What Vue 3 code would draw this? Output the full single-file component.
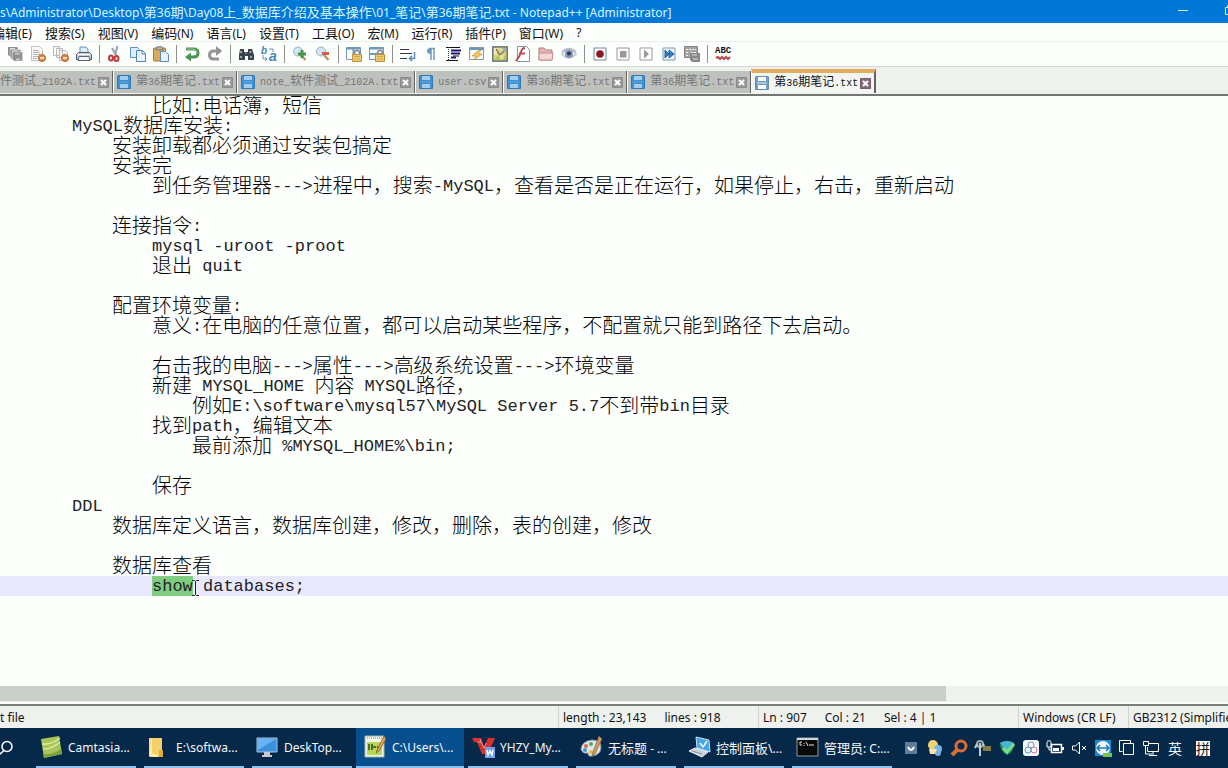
<script setup>
const title = 's\\Administrator\\Desktop\\第36期\\Day08上_数据库介绍及基本操作\\01_笔记\\第36期笔记.txt - Notepad++ [Administrator]'

const menus = ['编辑(E)', '搜索(S)', '视图(V)', '编码(N)', '语言(L)', '设置(T)', '工具(O)', '宏(M)', '运行(R)', '插件(P)', '窗口(W)', '?']

const toolGroups = [
  ['saveAll', 'close', 'closeAll', 'print'],
  ['cut', 'copy', 'paste'],
  ['undo', 'redo'],
  ['find', 'replace'],
  ['zoomIn', 'zoomOut'],
  ['syncV', 'syncH'],
  ['wrap', 'pilcrow', 'indent', 'lang', 'map', 'func', 'folder', 'eye'],
  ['record', 'stop', 'play', 'fast', 'saveMacro'],
  ['spell']
]

const icons = {
  saveAll: '<path d="M1 1h9l1 1v8H2l-1-1z" fill="#8f8f8f"/><path d="M3 3.500h10l1 1V13H5l-2-2z" fill="#9a9a9a" stroke="#e4e4e4" stroke-width=".5"/><path d="M5.500 6H15l.5.5V15H7l-1.500-1.500z" fill="#8f8f8f" stroke="#e4e4e4" stroke-width=".5"/><path d="M3 2.500h5M5 5h6M8 8h5" stroke="#dedede"/><path d="M9 13.500h4" stroke="#c4c4c4" stroke-width="2"/>',
  close: '<path d="M1.500 .5h8l3 3v11h-11z" fill="#fafafa" stroke="#c2c2c2"/><path d="M3 4.500h6M3 6.500h7M3 8.500h7M3 10.500h5M3 12.500h4" stroke="#b4b4b4"/><circle cx="12" cy="12" r="3.500" fill="#e08a40" stroke="#b9602a"/><path d="M10 12h4" stroke="#fff" stroke-width="1.500"/>',
  closeAll: '<path d="M.5 .5h6v9h-6zM3.500 2.500h6v9h-6zM6.500 4.500h6l2 2v8h-8z" fill="#fafafa" stroke="#b8b8b8"/><circle cx="12" cy="12" r="3.500" fill="#e08a40" stroke="#b9602a"/><path d="M10 12h4" stroke="#fff" stroke-width="1.500"/>',
  print: '<path d="M4 7V1h6l2 2v4z" fill="#dcecff" stroke="#6b8fb8"/><path d="M.5 8.500l2-2h11l2 2v5H.5z" fill="#c3ccd8" stroke="#4c5a70"/><path d="M3 10.500h10l1 4H2z" fill="#f2f7fd" stroke="#5a6678"/><path d="M1 8.500h14" stroke="#f4f6fa"/>',
  cut: '<path d="M10.500 0L8 9M5 2l4.500 8" stroke="#97a1ad" stroke-width="2" fill="none"/><ellipse cx="4" cy="12" rx="2" ry="2.500" fill="none" stroke="#c3393c" stroke-width="2"/><ellipse cx="9.500" cy="12.500" rx="2" ry="2.500" fill="none" stroke="#c3393c" stroke-width="2"/>',
  copy: '<path d="M.5 1.500h7l2 2v8h-9z" fill="#dfeeff" stroke="#5f8fc4"/><path d="M6.500 4.500h6l3 3v8h-9z" fill="#eaf4ff" stroke="#4f82ba"/><path d="M12 5v3h3" fill="none" stroke="#4f82ba"/>',
  paste: '<rect x=".5" y="2" width="12" height="13" rx="1" fill="#dba85c" stroke="#a9772e"/><path d="M4 .8h5l1 3H3z" fill="#b8b8b8" stroke="#777"/><path d="M7.500 5.500h5l3 3v7h-8z" fill="#e6f2ff" stroke="#5687bd"/>',
  undo: '<path d="M2 3h7.500q4.500 0 4.500 4t-4.500 4H6" fill="none" stroke="#4b9350" stroke-width="3"/><path d="M7 6.500v9L1 11z" fill="#4b9350"/><path d="M3 3h6q4 0 4 4" fill="none" stroke="#93c494"/>',
  redo: '<path d="M14 5H7q-4.500 0-4.500 4T7 13h5" fill="none" stroke="#949494" stroke-width="3"/><path d="M9 0v10l6-5z" fill="#949494"/>',
  find: '<path d="M2 3h4v3h4V3h4l2 6v5h-6v-4H7v4H1V9z" fill="#39434c"/><path d="M3 5v2M12.500 5v2M3 10v2M13 10v2M7.500 7h1" stroke="#b2c3cc" stroke-width="1.500"/>',
  replace: '<text x="0" y="8" font-family="Liberation Sans" font-size="10" font-weight="700" font-style="italic" fill="#4b83ad">b</text><text x="8" y="15" font-family="Liberation Sans" font-size="14" font-weight="700" font-style="italic" fill="#4189bb">a</text><path d="M2 9v4h4M4 11l2 2-2 2M8 3h4v3" fill="none" stroke="#6694b3"/>',
  zoomIn: '<path d="M9 9l4.500 5" stroke="#bd9474" stroke-width="2.500"/><circle cx="6" cy="5.500" r="4.500" fill="#d3e6f6" stroke="#9aafc6"/><path d="M10 4v8M6 8h8" stroke="#479350" stroke-width="3"/>',
  zoomOut: '<path d="M9 9l4.500 5" stroke="#bd9474" stroke-width="2.500"/><circle cx="6" cy="5.500" r="4.500" fill="#d3e6f6" stroke="#9aafc6"/><path d="M7 7.500h7" stroke="#d65b4c" stroke-width="3"/>',
  syncV: '<path d="M.5 1.500h14v12H.5z" fill="#f5fafc" stroke="#7398b8"/><path d="M1 2.500h13M7.500 2v11" stroke="#7398b8" stroke-width="2"/><path d="M8.500 8V6.500q0-2 2.500-2t2.500 2V8" fill="none" stroke="#888" stroke-width="1.500"/><path d="M6.500 8.500h9v7h-9z" fill="#f0ca70" stroke="#bb903c"/><path d="M8 10.500h6M8 13h6" stroke="#d9a744"/>',
  syncH: '<path d="M.5 1.500h14v12H.5z" fill="#f5fafc" stroke="#7398b8"/><path d="M1 2.500h13M1 8h13" stroke="#7398b8" stroke-width="2"/><path d="M8.500 8V6.500q0-2 2.500-2t2.500 2V8" fill="none" stroke="#888" stroke-width="1.500"/><path d="M6.500 8.500h9v7h-9z" fill="#f0ca70" stroke="#bb903c"/><path d="M8 10.500h6M8 13h6" stroke="#d9a744"/>',
  wrap: '<path d="M0 3.500h9M0 7.500h12M0 12.500h7" stroke="#34383d"/><path d="M14.500 6v6.500H10M12 10l-2.500 2.500L12 15" fill="none" stroke="#5e8db4" stroke-width="1.500"/>',
  pilcrow: '<path d="M8 2v12M11 2v12M6 2.500h6" stroke="#7199bb" stroke-width="1.500" fill="none"/><path d="M8 2q-4 0-4 3t4 3z" fill="#7199bb"/>',
  indent: '<path d="M0 1.500h14M7 10h6M0 14.500h12" stroke="#111"/><path d="M5 4.500h10M5 7.500h9M5 11.500h5" stroke="#191970" stroke-width="2"/><path d="M2.500 1v14" stroke="#333" stroke-dasharray="1 1"/>',
  lang: '<path d="M.5 1.500h14v12H.5z" fill="#f5fafc" stroke="#8098ac"/><path d="M1 3h13" stroke="#6898c2" stroke-width="2"/><path d="M10 4L3 10h4l-2 4 8-6H9l3-4z" fill="#f4c85c" stroke="#c99330" stroke-width=".7"/>',
  map: '<path d="M.8 .8h14.400v14.400H.8z" fill="#dbd98b" stroke="#4d5860" stroke-width="1.200"/><path d="M2 2h4l-1 4-3 3z" fill="#f2f0c8"/><path d="M2 14l4-5 3 5zM14 8v6h-4z" fill="#b4c25e"/><path d="M4 3l4 6 5-5" fill="none" stroke="#8b7a58" stroke-width="1.500"/><path d="M8 9l3 4" stroke="#f7f2c5"/><path d="M10 2h4v5z" fill="#88b5c4"/>',
  func: '<path d="M2.500 .5h9l3 3v12h-12z" fill="#fff" stroke="#88949c"/><path d="M10 2Q7 2 6 6T1 15M4 7.500h6" fill="none" stroke="#bc4b52" stroke-width="2"/>',
  folder: '<path d="M1 4V2h5l1.500 2H14v10H1z" fill="#e8b5b5" stroke="#b77a7d"/><path d="M1 7h14l-1 7H1z" fill="#f4d6d4" stroke="#c18e90"/>',
  eye: '<path d="M.5 8q7-9 15 0-8 8-15 0z" fill="#edf0f2" stroke="#a1a9b4"/><circle cx="8" cy="8" r="4" fill="#8198b5"/><circle cx="8" cy="7.500" r="2" fill="#26395b"/><path d="M1 6Q8-1 15 6" fill="none" stroke="#b6bac1" stroke-width="1.500"/>',
  record: '<path d="M2 2h12v12H2z" fill="#fff" stroke="#7188a0"/><circle cx="8" cy="8" r="3.800" fill="#8e1821"/>',
  stop: '<path d="M2 2h12v12H2z" fill="#fff" stroke="#999"/><path d="M5 5h6.500v6.500H5z" fill="#999"/>',
  play: '<path d="M2 2h12v12H2z" fill="#fff" stroke="#999"/><path d="M6 3.500v9L11 8z" fill="#999"/>',
  fast: '<path d="M2 2h12v12H2z" fill="#eef6ff" stroke="#7797b8"/><path d="M4 4v8l4-4zM8 4v8l5-4z" fill="#357cc1" stroke="#28659b"/>',
  saveMacro: '<path d="M.5 .5h13v11H.5z" fill="#a4a4a4" stroke="#858585"/><path d="M2 3.500h10M2 6.500h3M7 6.500h5M2 9.500h3" stroke="#f4f4f4" stroke-dasharray="2 1"/><path d="M6 7h10v9H8l-2-2z" fill="#898989"/><path d="M8 9h5M9 13h5" stroke="#ddd"/>',
  spell: '<text x="0" y="7" font-family="Liberation Mono" font-size="9" font-weight="700" fill="#111">ABC</text><path d="M1 12l2-1 2 2 2-2 2 2 2-2 2 2 2-2" fill="none" stroke="#bc4a4e" stroke-width="2"/>'
}

const tabs = [
  { name: '件测试_2102A.txt', cut: true },
  { name: '第36期笔记.txt' },
  { name: 'note_软件测试_2102A.txt' },
  { name: 'user.csv' },
  { name: '第36期笔记.txt' },
  { name: '第36期笔记.txt' },
  { name: '第36期笔记.txt', active: true }
]

const lines = [
  [3, '比如:电话簿，短信'],
  [1, 'MySQL数据库安装:'],
  [2, '安装卸载都必须通过安装包搞定'],
  [2, '安装完'],
  [3, '到任务管理器--->进程中，搜索-MySQL，查看是否是正在运行，如果停止，右击，重新启动'],
  [0, ''],
  [2, '连接指令:'],
  [3, 'mysql -uroot -proot'],
  [3, '退出 quit'],
  [0, ''],
  [2, '配置环境变量:'],
  [3, '意义:在电脑的任意位置，都可以启动某些程序，不配置就只能到路径下去启动。'],
  [0, ''],
  [3, '右击我的电脑--->属性--->高级系统设置--->环境变量'],
  [3, '新建 MYSQL_HOME 内容 MYSQL路径，'],
  [4, '例如E:\\software\\mysql57\\MySQL Server 5.7不到带bin目录'],
  [3, '找到path，编辑文本'],
  [4, '最前添加 %MYSQL_HOME%\\bin;'],
  [0, ''],
  [3, '保存'],
  [1, 'DDL'],
  [2, '数据库定义语言，数据库创建，修改，删除，表的创建，修改'],
  [0, ''],
  [2, '数据库查看'],
  [3, 'show databases;']
]

// Splits mixed text into runs so that Latin and Chinese keep their own size.
function runs(text) {
  return (text.match(/[\x20-\x7e]+|[^\x20-\x7e]+/g) || []).map(t => ({ t, kind: /^[\x20-\x7e]/.test(t) ? 'latin' : 'han' }))
}

const tasks = [
  { name: 'Camtasia...', svg: '<path d="M1 4l18-3 3 18-18 4z" fill="#a9c65a"/><path d="M2 9Q11 10 20 3M3 14q9 0 17-7" fill="none" stroke="#dbe9a4" stroke-width="1.500"/><path d="M4 23l18-4-1-5q-8 6-18 5z" fill="#7fa33c"/>' },
  { name: 'E:\\softwa...', svg: '<path d="M1 3h12v18H1z" fill="#f9dd83"/><path d="M4 3h10v16H4z" fill="#f5cf67"/><path d="M1 21l3-18v15l8 4H2z" fill="#ffe9a6"/><path d="M11 15h4v7h-4z" fill="#e0ac3d"/>' },
  { name: 'DeskTop...', svg: '<path d="M1 3h20v14H1z" fill="#3d8fdf" stroke="#a9c6dc"/><path d="M2 4h18L2 15z" fill="#68b3f1"/><path d="M8 17h6v3h2v2H6v-2h2z" fill="#c8cdd2"/>' },
  { name: 'C:\\Users\\...', active: true, svg: '<path d="M1 1h19v21H1z" fill="#f2f5ea" stroke="#a9b5a0"/><path d="M3 7h15v13H3z" fill="#b6d858"/><path d="M3 3h15" stroke="#798690" stroke-dasharray="1 1"/><path d="M5 9v6M8 9v6M9 12h3M13 12h3" stroke="#32451e" stroke-width="1.500"/><path d="M20 1L13 15l-1 3 3-2L22 4z" fill="#e5a647" stroke="#735125" stroke-width=".7"/>' },
  { name: 'YHZY_My...', svg: '<path d="M0 3h9l3 9 4-9h7l-7 16h-6L5 7H2z" fill="#d9312d"/><path d="M8 4l4 9 2-5M5 7h4" fill="none" stroke="#fff" stroke-opacity=".5"/><path d="M13 12h10v11H13z" fill="#6ea0ed"/><path d="M15 15l1 5 2-4 2 4 1-5" fill="none" stroke="#fff" stroke-width="1.500"/>' },
  { name: '无标题 - ...', svg: '<path d="M1 14Q2 6 12 5q9 0 9 7 0 8-9 9-4 1-4-3-6 1-7-4z" fill="#dce8ed" stroke="#8299a5"/><circle cx="6" cy="11" r="2" fill="#de674f"/><circle cx="11" cy="9" r="2" fill="#53aa63"/><circle cx="5" cy="15" r="2" fill="#4e93cc"/><circle cx="11" cy="17" r="2" fill="#e9bd3d"/><path d="M19 1l3 3-7 15-3 2 1-4z" fill="#d49a5a" stroke="#805f41" stroke-width=".7"/>' },
  { name: '控制面板\\...', svg: '<path d="M8 2l13 3 1 12-13-4z" fill="#48a5e9" stroke="#c1e0f5"/><path d="M12 8l3 4 4-6" fill="none" stroke="#f5fbff" stroke-width="1.500"/><path d="M1 16l6-3 13 4-6 5z" fill="#c7d2db" stroke="#eef2f5"/><path d="M4 16l10 3" stroke="#8492a0"/>' },
  { name: '管理员: C:...', svg: '<path d="M1 3h21v18H1z" fill="#080808" stroke="#94989b"/><path d="M1 4h21" stroke="#d3d6d8" stroke-width="2"/><path d="M6 7H4v3h2M8 8v1M8 10v1M10 7l2 4M13 10h5" fill="none" stroke="#e6e6e6"/>' }
]

const tray = [
  '<path d="M3 3h12v12H3z" fill="#607b9c"/><path d="M6 8q3 6 6 0" fill="none" stroke="#fff" stroke-width="2"/>',
  '<circle cx="7" cy="6" r="5" fill="#f3d071"/><circle cx="12" cy="10" r="4" fill="#73b7e3"/><circle cx="12" cy="14" r="3" fill="#77aee0"/><path d="M3 10h8l-2 5H4z" fill="#f7e4aa"/>',
  '<circle cx="11" cy="7" r="5" fill="none" stroke="#dc6c34" stroke-width="3"/><path d="M7 11l-5 5" stroke="#dc6c34" stroke-width="4"/>',
  '<circle cx="6" cy="5" r="3" fill="none" stroke="#a5aaa9" stroke-width="2"/><path d="M6 4v13M3 5l-2 4M9 5l2 4" stroke="#c5caca" stroke-width="2"/><path d="M9 7h8v5H9z" fill="#867f45"/>',
  '<path d="M2 4q7-4 14 0 0 9-7 12Q2 12 2 4z" fill="#24945f"/><path d="M2 4q7-4 14 0L9 12z" fill="#4bb5d7"/><path d="M5 9l4 4 7-8" fill="none" stroke="#7bdf83" stroke-width="3"/>',
  '<rect x="1" y="1" width="16" height="16" rx="3" fill="#f5f8fa"/><circle cx="9" cy="6" r="3" fill="none" stroke="#7190a8"/><circle cx="6" cy="11" r="3" fill="none" stroke="#4f9dcc"/><circle cx="12" cy="11" r="3" fill="none" stroke="#d7788e"/>',
  '<path d="M5.500 5.500h10v8h-10z" fill="none" stroke="#fff" stroke-width="1.500"/><path d="M7 9h6v3H7zM16 8h2v3h-2z" fill="#fff"/><path d="M1 3v5h4V3M2 1v2M4 1v2M3 8v3h2" fill="none" stroke="#fff"/>',
  '<path d="M2.500 7h3l4-4v12l-4-4h-3z" fill="none" stroke="#fff"/><path d="M12 7l4 4M16 7l-4 4" stroke="#fff"/>',
  '<path d="M1 1h16v16H1z" fill="#1689d8"/><circle cx="9" cy="9" r="7" fill="#f2f8fc"/><path d="M4 9h10M6 6L3 9l3 3M12 6l3 3-3 3" fill="none" stroke="#1778ba" stroke-width="1.500"/><path d="M9 14h9v4H9z" fill="#78c34c"/>',
  '<path d="M4.500 12.500h-3v-11h11v3M5.500 4.500h10v11h-10z" fill="none" stroke="#fff"/>',
  '<path d="M6 4.500h10.500v8H5.500V8M1.500 2.500h5v4h-5zM3.500 7v8H10M11 13v3M7 16.500h8" fill="none" stroke="#fff"/>'
]
</script>

<template>
  <div class="window">
    <header class="titlebar">
      <h1 class="title"><span v-for="(r, k) in runs(title)" :key="k" :class="r.kind">{{ r.t }}</span></h1>
      <div class="captions">
        <button class="caption" type="button" aria-label="Minimize"><svg width="12" height="12"><path d="M1 6.500h10" stroke="#d9f4ff" /></svg></button>
        <button class="caption last" type="button" aria-label="Restore"><svg width="12" height="12"><path d="M.5 3.500h8v7h-8zM2.500 3V1.500h8v7H9" fill="none" stroke="#d9f4ff" /></svg></button>
      </div>
    </header>

    <nav class="menubar">
      <button v-for="m in menus" :key="m" class="menu" type="button"><span v-for="(r, k) in runs(m)" :key="k" :class="r.kind">{{ r.t }}</span></button>
    </nav>

    <div class="toolbar">
      <div v-for="(group, g) in toolGroups" :key="g" class="tool-group">
        <button v-for="name in group" :key="name" class="tool" type="button" :aria-label="name">
          <svg width="16" height="16" viewBox="0 0 16 16" v-html="icons[name]"></svg>
        </button>
      </div>
    </div>

    <div class="tabs">
      <div v-for="(tab, i) in tabs" :key="i" class="tab" :class="{ active: tab.active, cut: tab.cut }">
        <button class="tab-label" type="button">
          <svg v-if="!tab.cut" class="disk" width="14" height="14" viewBox="0 0 14 14">
            <path d="M1 .5h12l.5.5v12.500H.5V1z" :fill="tab.active ? '#6d9fc6' : '#3d8fd1'" :stroke="tab.active ? '#668caf' : '#3479ad'" />
            <path d="M3 1h8v4H3zM3 9h8v4H3z" :fill="tab.active ? '#fff' : '#a3cdeb'" />
            <path d="M2 7h10" :stroke="tab.active ? '#dff1fc' : '#63aadf'" />
          </svg>
          <span class="tab-name"><span v-for="(r, k) in runs(tab.name)" :key="k" :class="r.kind">{{ r.t }}</span></span>
        </button>
        <button class="tab-close" type="button" aria-label="Close tab">
          <svg width="11" height="11" viewBox="0 0 11 11">
            <path d="M.5 .5h10v10H.5z" :fill="tab.active ? '#866b7b' : '#999'" :stroke="tab.active ? '#765b6c' : '#8a8a8a'" />
            <path d="M3 3l5 5M8 3L3 8" stroke="#fff" stroke-width="2" />
          </svg>
        </button>
      </div>
    </div>

    <main class="editor">
      <div v-for="(line, i) in lines" :key="i" class="line" :class="['tab-' + line[0], { current: i === lines.length - 1 }]"><template v-if="i === lines.length - 1"><span class="latin selected">show<svg class="ibeam" width="7" height="16"><path d="M0 .5h2.500l1 1 1-1H7M3.500 1v14M0 15.500h2.500l1-1 1 1H7" fill="none" stroke="#222" /></svg></span><span class="latin"> databases;</span></template><template v-else><span v-for="(r, k) in runs(line[1])" :key="k" :class="r.kind">{{ r.t }}</span></template></div>
    </main>

    <div class="hscroll"><div class="thumb"></div></div>

    <footer class="status">
      <div class="cell type">t file</div>
      <div class="cell size"><span>length : 23,143</span><span>lines : 918</span></div>
      <div class="cell pos"><span>Ln : 907</span><span>Col : 21</span><span>Sel : 4 | 1</span></div>
      <div class="cell eol">Windows (CR LF)</div>
      <div class="cell enc">GB2312 (Simplified)</div>
    </footer>

    <div class="taskbar">
      <button class="search" type="button" aria-label="Search"><svg width="16" height="16" viewBox="0 0 16 16"><circle cx="7" cy="6.500" r="5" fill="none" stroke="#fff" stroke-width="1.500" /><path d="M4 10.500L-1 15" stroke="#fff" stroke-width="1.500" /></svg></button>
      <div class="tasks">
        <button v-for="t in tasks" :key="t.name" class="task" :class="{ active: t.active }" type="button">
          <svg width="23" height="24" viewBox="0 0 23 24" v-html="t.svg"></svg>
          <span><span v-for="(r, k) in runs(t.name)" :key="k" :class="r.kind">{{ r.t }}</span></span>
        </button>
      </div>
      <div class="tray">
        <button v-for="(s, i) in tray" :key="i" class="tray-icon" type="button" aria-label="Tray item"><svg width="18" height="18" viewBox="0 0 18 18" v-html="s"></svg></button>
        <button class="tray-icon ime" type="button">英</button>
        <button class="tray-icon pinyin" type="button"><span>拼</span></button>
      </div>
    </div>
  </div>
</template>

<style>
body {
  background: #fdfffd;
}
</style>

<style scoped>
.window {
  display: flex;
  flex-direction: column;
  height: 100vh;
  overflow: hidden;
  background: #fdfffd;
  color: #111;
  font-family: "Noto Sans", "Noto Sans CJK SC", sans-serif;
  font-size: 12px;
  white-space: nowrap;
}

button {
  margin: 0;
  padding: 0;
  border: 0;
  background: none;
  color: inherit;
  font: inherit;
}

svg {
  display: block;
  flex: none;
  overflow: visible;
}

.han {
  font-size: 13px;
}

.titlebar {
  display: flex;
  justify-content: space-between;
  flex: none;
  height: 23px;
  background: #0078d7;
  color: #d9f6ff;
}

.title {
  margin: 0;
  font-size: 12px;
  font-weight: 400;
  line-height: 24px;
}

.captions {
  display: flex;
  align-items: flex-start;
  overflow: hidden;
}

.caption {
  width: 46px;
  height: 20px;
  display: flex;
  align-items: center;
  justify-content: center;
}

.caption.last {
  width: 31px;
  justify-content: flex-end;
  margin-right: -9px;
}

.menubar {
  display: flex;
  flex: none;
  gap: 13px;
  height: 18px;
  margin-left: -8px;
  border-bottom: 1px solid #eceeec;
}

.menu {
  height: 20px;
  line-height: 20px;
}

.toolbar {
  display: flex;
  flex: none;
  height: 24px;
  padding-left: 3px;
  border-bottom: 1px solid #d6d8d6;
}

.tool-group {
  display: flex;
  align-items: center;
}

.tool-group + .tool-group::before {
  content: "";
  width: 1px;
  height: 18px;
  margin: 0 3px 0 4px;
  background: #8d8f8d;
}

.tool {
  width: 23px;
  height: 22px;
  display: flex;
  align-items: center;
  justify-content: center;
}

.tabs {
  display: flex;
  align-items: flex-end;
  flex: none;
  height: 26px;
  padding-bottom: 1px;
  background: #eff1ef;
  border-bottom: 2px solid #747674;
}

.tab {
  display: flex;
  align-items: center;
  gap: 2px;
  box-sizing: border-box;
  height: 22px;
  padding: 0 3px;
  background: #bfc1bf;
  border-right: 1px solid #636563;
  border-left: 1px solid #fbfdfb;
  color: #747674;
}

.tab.cut {
  padding-left: 0;
  border-left: 0;
}

.tab.active {
  height: 24px;
  background: #f3f5f3;
  border-top: 4px solid #e2ac5f;
  border-right-width: 2px;
  color: #111;
}

.tab-label {
  display: flex;
  align-items: center;
  gap: 5px;
}

.tab-name {
  line-height: 20px;
}

.tab-name .han {
  font-size: 12px;
}

.tab-name .latin {
  font-family: "Liberation Mono", monospace;
  font-size: 10px;
}

.editor {
  flex: 1;
  min-height: 0;
  overflow: hidden;
  color: #000;
}

.line {
  display: flex;
  height: 20px;
  line-height: 20px;
  white-space: pre;
}

.line .han {
  font-family: "Liberation Sans", "Noto Sans CJK SC", sans-serif;
  font-size: 20px;
  font-weight: 300;
}

.line .latin {
  box-sizing: border-box;
  height: 20px;
  padding-top: 1px;
  color: #222;
  font-family: "Liberation Mono", monospace;
  font-size: 17px;
}

.tab-1 {
  padding-left: 72px;
}

.tab-2 {
  padding-left: 112px;
}

.tab-3 {
  padding-left: 152px;
}

.tab-4 {
  padding-left: 192px;
}

.current {
  background: #e8e8ff;
}

.selected {
  position: relative;
  background: #80cc80;
}

.ibeam {
  position: absolute;
  right: -6px;
  top: 4px;
}

.hscroll {
  flex: none;
  height: 16px;
  background: #eff1ef;
}

.thumb {
  width: 77%;
  height: 15px;
  background: #cbcdcb;
}

.status {
  display: flex;
  flex: none;
  height: 22px;
  margin-top: 2px;
  border-top: 2px solid #7b7d7b;
  background: #eff1ef;
}

.cell {
  display: flex;
  box-sizing: border-box;
  padding-left: 4px;
  border-left: 1px solid #cfd1cf;
  line-height: 24px;
  overflow: hidden;
}

.type {
  flex: 1;
  padding-left: 0;
  border-left: 0;
}

.size {
  width: 200px;
  gap: 18px;
}

.pos {
  width: 260px;
  gap: 18px;
}

.eol {
  width: 110px;
}

.enc {
  width: 100px;
}

.taskbar {
  display: flex;
  flex: none;
  height: 40px;
  background: #06294a;
  color: #f4f8fb;
}

.search {
  width: 36px;
  display: flex;
  align-items: center;
}

.tasks {
  display: flex;
  gap: 8px;
  flex: 1;
}

.task {
  display: flex;
  align-items: center;
  gap: 5px;
  box-sizing: border-box;
  width: 100px;
  padding-left: 4px;
  border-bottom: 2px solid #8fc1ee;
}

.task.active {
  width: 108px;
  margin: 0 -4px;
  padding-left: 8px;
  background: #074f8e;
}

.tray {
  display: flex;
  align-items: center;
  padding-right: 13px;
}

.tray-icon {
  width: 24px;
  display: flex;
  justify-content: center;
}

.ime {
  font-size: 14px;
}

.pinyin {
  width: 28px;
  padding-left: 4px;
  font-size: 14px;
}

.pinyin span {
  width: 14px;
  background: #f8fbfd;
  color: #111;
  line-height: 15px;
}
</style>
